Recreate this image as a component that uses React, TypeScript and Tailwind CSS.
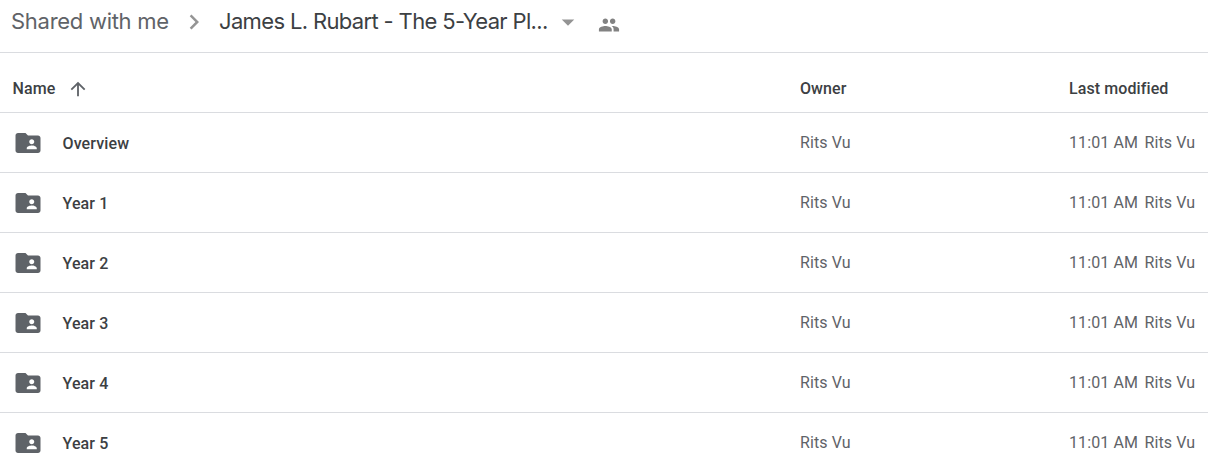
import { MdArrowDropDown, MdArrowUpward, MdChevronRight, MdFolderShared, MdPeople } from "react-icons/md";

const folders = [
  { name: "Overview", owner: "Rits Vu", time: "11:01 AM" },
  { name: "Year 1", owner: "Rits Vu", time: "11:01 AM" },
  { name: "Year 2", owner: "Rits Vu", time: "11:01 AM" },
  { name: "Year 3", owner: "Rits Vu", time: "11:01 AM" },
  { name: "Year 4", owner: "Rits Vu", time: "11:01 AM" },
  { name: "Year 5", owner: "Rits Vu", time: "11:01 AM" },
];

function Breadcrumbs() {
  return (
    <nav className="flex h-[53px] shrink-0 items-start border-b border-[#dadce0] pl-[11px] pt-[6px] font-['Inter',sans-serif] text-[22px] leading-[31px] whitespace-nowrap">
      <span className="w-[158px] tracking-[-0.28px] text-[#5f6368]">Shared with me</span>
      <MdChevronRight size={30} className="ml-[10px] mt-px text-[#949494]" />
      <span className="ml-[10px] w-[329px] tracking-[-0.65px] text-[#3c4043]">James L. Rubart - The 5-Year Pl...</span>
      <MdArrowDropDown size={30} className="ml-[4.5px] mt-px text-[#949494]" />
      <MdPeople size={22} className="ml-[15.5px] mt-[7.5px] text-[#828282]" />
    </nav>
  );
}

function FolderRow({ name, owner, time }: { name: string; owner: string; time: string }) {
  return (
    <div className="grid h-[60px] shrink-0 grid-cols-[800px_269px_1fr] items-center border-b border-[#dadce0] text-[16px] tracking-[0.1px] whitespace-nowrap">
      <div className="flex items-center">
        <MdFolderShared size={30} className="ml-[13px] mt-px text-[#5f6368]" />
        <span className="ml-[19.5px] pt-[3px] font-medium tracking-[0.13px] text-[#3c4043]">{name}</span>
      </div>
      <div className="text-[#5f6368]">{owner}</div>
      <div className="flex gap-[6.5px] text-[#5f6368]">
        <span>{time}</span>
        <span>{owner}</span>
      </div>
    </div>
  );
}

export default function App() {
  return (
    <div className="flex h-[470px] w-[1208px] flex-col overflow-hidden bg-white font-['Roboto',sans-serif]">
      <Breadcrumbs />
      <div className="grid h-[60px] shrink-0 grid-cols-[800px_269px_1fr] items-center border-b border-[#dadce0] pt-[12px] text-[16px] font-medium tracking-[0.09px] text-[#3c4043]">
        <div className="flex items-center pl-[12.5px]">
          <span>Name</span>
          <MdArrowUpward size={22} className="ml-[12px] text-[#5f6368]" />
        </div>
        <div>Owner</div>
        <div>Last modified</div>
      </div>
      {folders.map((folder) => (
        <FolderRow key={folder.name} {...folder} />
      ))}
    </div>
  );
}
